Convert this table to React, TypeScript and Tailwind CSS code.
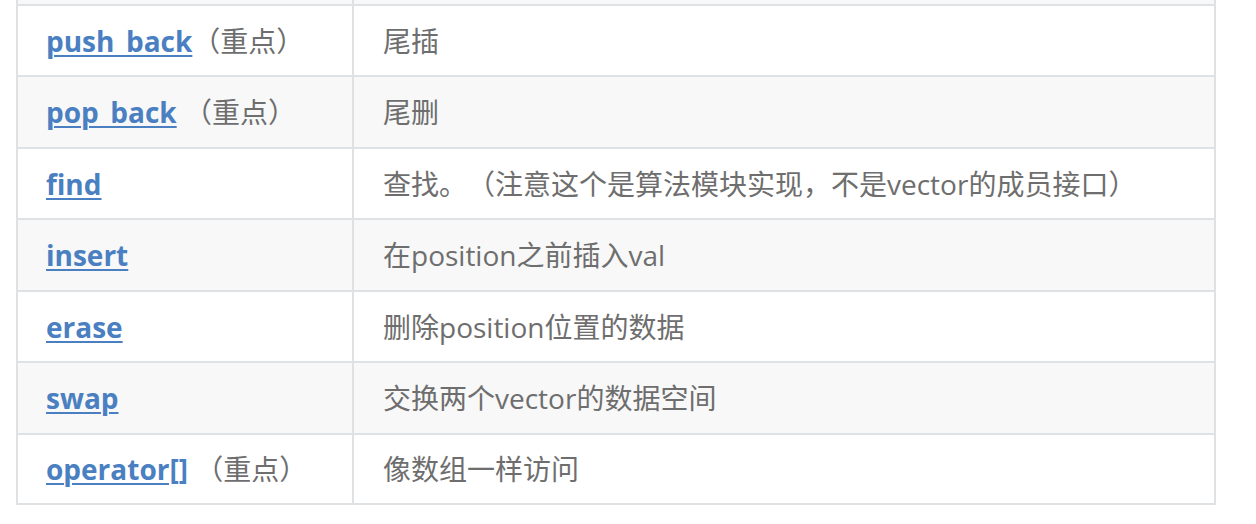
const rows = [
  { name: 'push_back', note: '（重点）', desc: '尾插', h: 'h-[71px]', bg: 'bg-white' },
  { name: 'pop_back', note: ' （重点）', desc: '尾删', h: 'h-[72px]', bg: 'bg-[#f8f8f8]' },
  {
    name: 'find',
    note: '',
    desc: '查找。（注意这个是算法模块实现，不是vector的成员接口）',
    h: 'h-[71px]',
    bg: 'bg-white',
  },
  { name: 'insert', note: '', desc: '在position之前插入val', h: 'h-[72px]', bg: 'bg-[#f8f8f8]' },
  { name: 'erase', note: '', desc: '删除position位置的数据', h: 'h-[71px]', bg: 'bg-white' },
  { name: 'swap', note: '', desc: '交换两个vector的数据空间', h: 'h-[72px]', bg: 'bg-[#f8f8f8]' },
  { name: 'operator[]', note: ' （重点）', desc: '像数组一样访问', h: 'h-[70px]', bg: 'bg-white' },
];

export default function App() {
  return (
    <div className="h-[524px] w-[1256px] overflow-hidden bg-white pl-4 font-['Open_Sans','Noto_Sans_CJK_SC',sans-serif] text-[28px] text-[#6e6e6e] [text-spacing-trim:space-all]">
      <div className="w-[1200px] border-x-2 border-[#dfe2e5]">
        {/* tail of the previous row */}
        <div className="grid h-[6px] grid-cols-[336px_1fr] border-b-2 border-[#dfe2e5] bg-[#f8f8f8]">
          <div className="border-r-2 border-[#dfe2e5]" />
          <div />
        </div>

        {rows.map((r) => (
          <div
            key={r.name}
            className={`grid grid-cols-[336px_1fr] border-b-2 border-[#dfe2e5] ${r.h} ${r.bg}`}
          >
            <div className="flex items-center whitespace-pre border-r-2 border-[#dfe2e5] pl-[28px]">
              <a className="font-bold text-[#4a7fc1] underline decoration-2 underline-offset-[3px]" href="#">
                {r.name}
              </a>
              <span>{r.note}</span>
            </div>
            <div className="flex items-center pl-[29px]">{r.desc}</div>
          </div>
        ))}
      </div>
    </div>
  );
}
